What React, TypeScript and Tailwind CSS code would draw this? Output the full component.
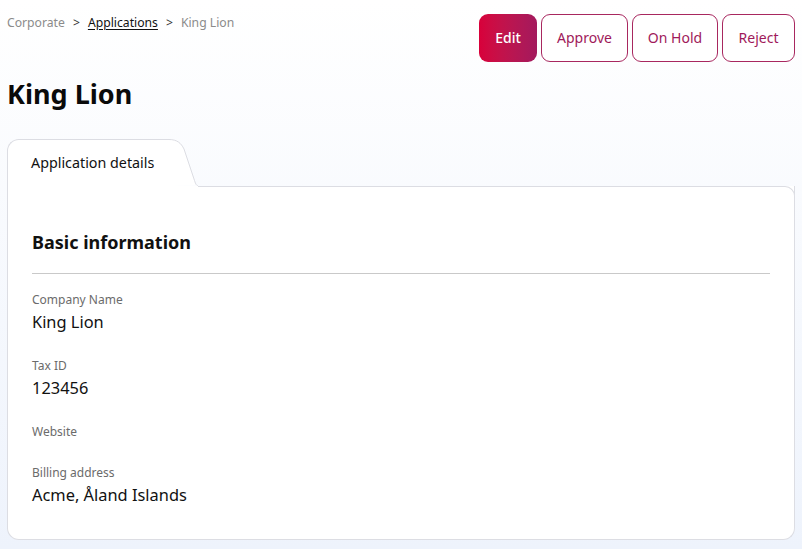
import React from "react";

const font = { fontFamily: '"Noto Sans", "Open Sans", sans-serif' };

function Field({ label, value }: { label: string; value?: string }) {
  return (
    <div className="flex flex-col">
      <div className="text-[12px] leading-[16px] text-[#6b6b6b]">{label}</div>
      {value ? (
        <div className="mt-[3px] text-[16.4px] leading-[22px] text-[#111]">{value}</div>
      ) : null}
    </div>
  );
}

export default function App() {
  return (
    <div
      className="w-[802px] h-[549px] overflow-hidden bg-linear-to-b from-white to-[#eef3fc] px-[7px]"
      style={font}
    >
      <div className="flex justify-between pt-[14px]">
        <nav className="flex items-center gap-[8px] h-[17px] mt-[1px] text-[12.2px] text-[#8b8b8b]">
          <span>Corporate</span>
          <span className="text-[#333]">&gt;</span>
          <span className="text-[#111] underline underline-offset-2">Applications</span>
          <span className="text-[#333]">&gt;</span>
          <span>King Lion</span>
        </nav>
        <div className="flex gap-[4px]">
          <button className="h-[48px] w-[58px] pb-[2px] rounded-[9px] text-[14px] font-medium text-white bg-linear-to-r from-[#d8003a] to-[#a3195d]">
            Edit
          </button>
          <button className="h-[48px] w-[87px] pb-[2px] rounded-[9px] text-[14px] text-[#a0195a] border border-[#a8275f] bg-white">
            Approve
          </button>
          <button className="h-[48px] w-[86px] pb-[2px] rounded-[9px] text-[14px] text-[#a0195a] border border-[#a8275f] bg-white">
            On Hold
          </button>
          <button className="h-[48px] w-[73px] pb-[2px] rounded-[9px] text-[14px] text-[#a0195a] border border-[#a8275f] bg-white">
            Reject
          </button>
        </div>
      </div>

      <h1 className="mt-[14px] text-[27px] leading-[36px] font-bold text-[#0a0a0a]">King Lion</h1>

      <div className="mt-[27px] flex h-[47px]">
        <div className="w-[158px] bg-white border-l border-t border-[#dcdde3] rounded-tl-[12px] pl-[23px] pt-[12px] text-[14.3px] text-[#111]">
          Application details
        </div>
        <svg width="33" height="47" viewBox="0 0 33 47" className="shrink-0 block">
          <path d="M0 0 L4 0 C12 0 16 4 19 10 L 29 40 C30.5 44.5 31 46.5 33 46.5 L0 47 Z" fill="#ffffff" />
          <path d="M0 0.5 L4 0.5 C12 0.5 16 4 19 10 L 29 40 C30.5 44.5 31 46.5 33 46.5" fill="none" stroke="#dcdde3" strokeWidth="1" />
        </svg>
        <div className="flex-1 self-end h-[10px] border-t border-r border-[#dcdde3] rounded-tr-[12px] bg-white mb-[-10px] relative"></div>
      </div>
      <div className="bg-white border-l border-r border-b border-[#dcdde3] rounded-b-[12px] px-[24px] pt-[44px] h-[354px]">
        <h2 className="text-[18px] leading-[24px] font-bold text-[#111]">Basic information</h2>
        <div className="mt-[19px] border-t border-[#c9c9c9]"></div>
        <div className="mt-[18px] flex flex-col gap-[25px]">
          <Field label="Company Name" value="King Lion" />
          <Field label="Tax ID" value="123456" />
          <Field label="Website" />
          <Field label="Billing address" value="Acme, Åland Islands" />
        </div>
      </div>
    </div>
  );
}
